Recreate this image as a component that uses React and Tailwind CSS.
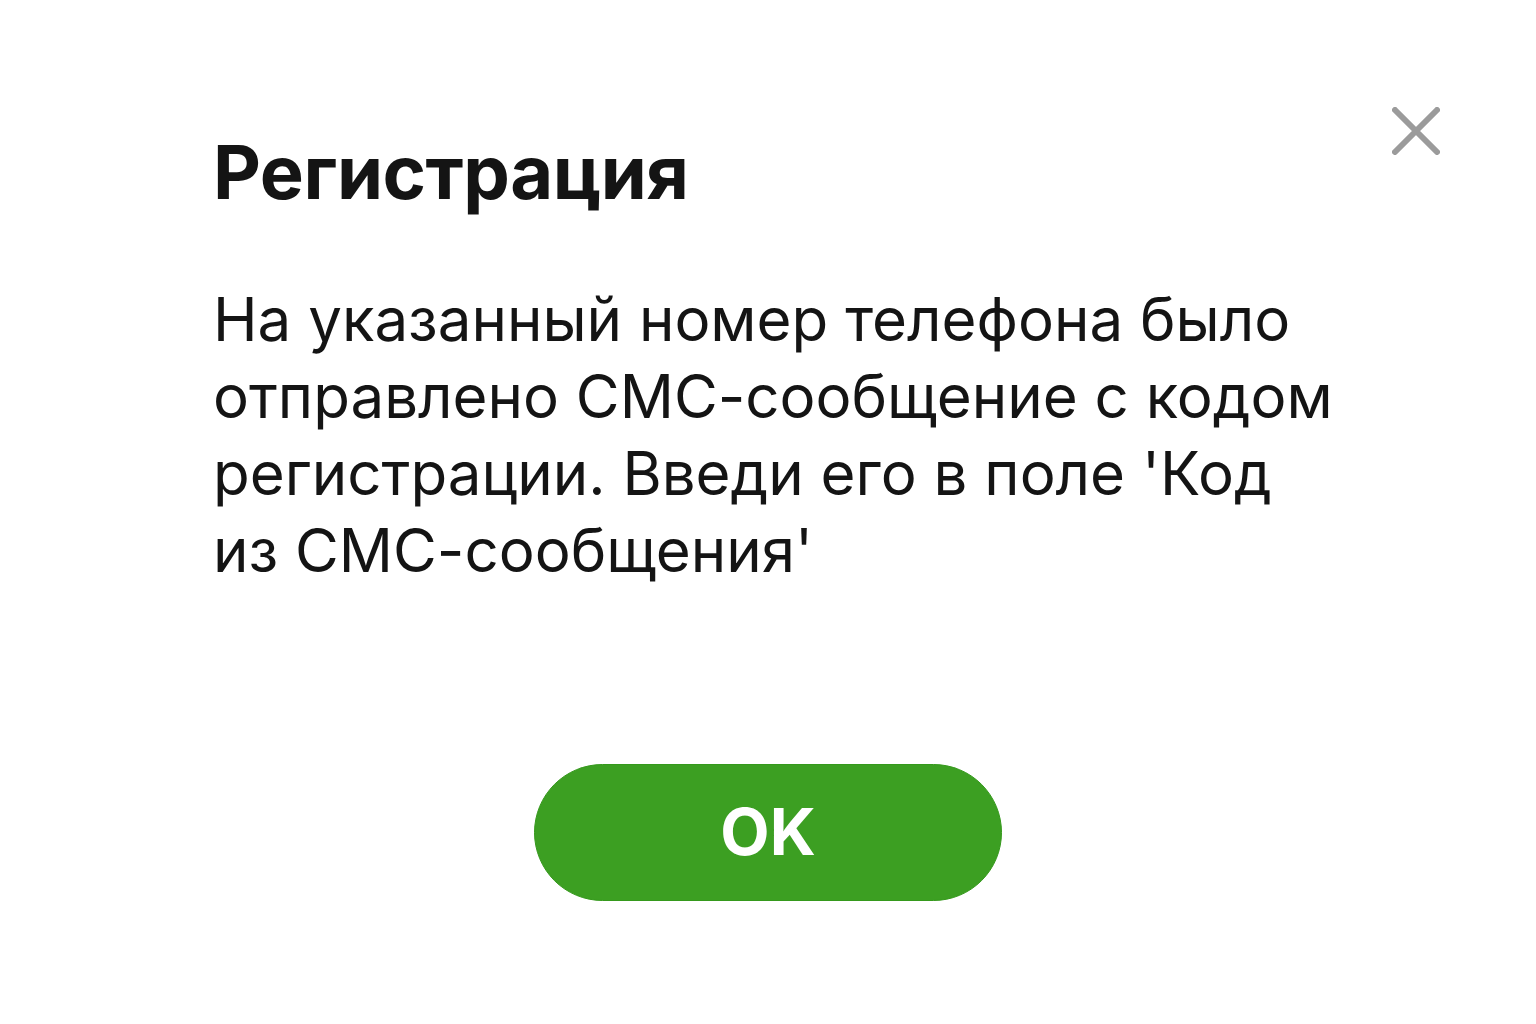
import React from 'react';

// Registration confirmation dialog
const App = () => {
  return (
    <div className="w-full min-h-screen bg-white flex flex-col font-['Inter','Noto_Sans',sans-serif] text-[#141414]">
      {/* Header with close button */}
      <div className="flex justify-end pt-[107px] pr-[96px]">
        <button className="w-[48px] h-[48px] flex items-center justify-center" aria-label="Закрыть">
          <svg width="48" height="48" viewBox="0 0 48 48" fill="none">
            <path d="M3 3L45 45M45 3L3 45" stroke="#9b9b9b" strokeWidth="6" strokeLinecap="round" />
          </svg>
        </button>
      </div>

      {/* Title and message */}
      <div className="pl-[213px] -mt-[27px]">
        <h1 className="text-[74px] font-bold leading-[1.2] tracking-[-0.5px]">Регистрация</h1>
        <p className="mt-[64px] text-[60px] leading-[77px] max-w-[1125px]">
          На указанный номер телефона было отправлено СМС-сообщение с кодом регистрации. Введи его в поле 'Код из СМС-сообщения'
        </p>
      </div>

      {/* Action */}
      <div className="flex justify-center mt-[175px]">
        <button className="w-[468px] h-[137px] rounded-full bg-[#3c9f22] border border-[#35991c] text-white text-[64px] font-bold">
          OK
        </button>
      </div>
    </div>
  );
};

export default App;
